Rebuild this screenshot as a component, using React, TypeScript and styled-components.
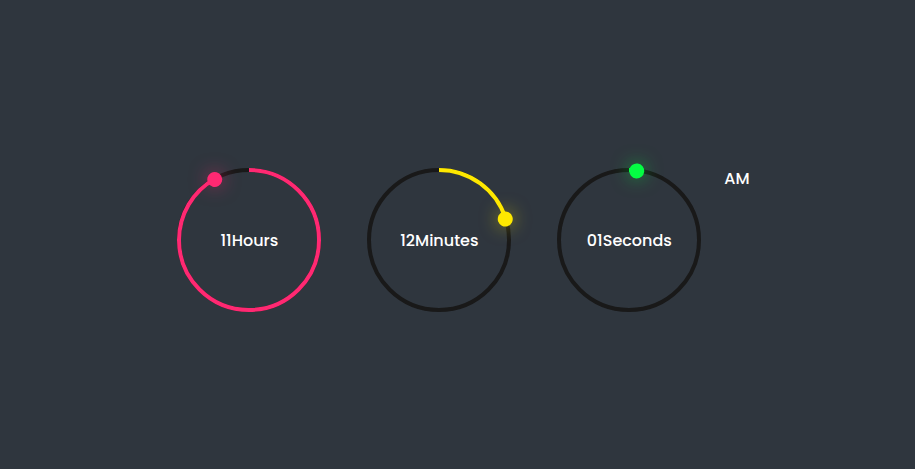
import React from "react";
import styled, { createGlobalStyle } from "styled-components";

const Global = createGlobalStyle`
  html, body { margin: 0; padding: 0; background: #2f363e; }
  body { font-family: Poppins, Inter, "Noto Sans", sans-serif; }
`;

const Page = styled.div`
  min-height: 469px;
  box-sizing: border-box;
  padding: 11px 0 0 9px;
  display: flex;
  justify-content: center;
  align-items: center;
  color: #fff;
`;

const Clock = styled.div`
  display: flex;
  align-items: center;
  gap: 40px;
`;

const Circle = styled.div`
  position: relative;
  width: 150px;
  height: 150px;
  display: flex;
  justify-content: center;
  align-items: center;
`;

const Ring = styled.svg`
  position: absolute;
  inset: 0;
  width: 150px;
  height: 150px;
  transform: rotate(-90deg);
`;

const Track = styled.circle`
  fill: transparent;
  stroke: #191919;
  stroke-width: 4;
`;

const Progress = styled.circle<{ $clr: string }>`
  fill: transparent;
  stroke: ${(p) => p.$clr};
  stroke-width: 4;
  stroke-dasharray: 440;
`;

const Dots = styled.div<{ $clr: string }>`
  position: absolute;
  inset: 0;
  display: flex;
  justify-content: center;
  z-index: 2;
  &::before {
    content: "";
    position: absolute;
    top: -2.5px;
    width: 15px;
    height: 15px;
    border-radius: 50%;
    background: ${(p) => p.$clr};
    box-shadow: 0 0 18px ${(p) => p.$clr}88, 0 0 60px ${(p) => p.$clr}1c;
  }
`;

const Label = styled.div`
  position: relative;
  z-index: 3;
  font-size: 16px;
  font-weight: 500;
  color: #fff;
`;

const Ap = styled.div`
  margin-left: -20px;
  font-size: 16px;
  font-weight: 500;
  transform: translateY(-62px);
  color: #fff;
`;

type Unit = { value: string; label: string; frac: number; clr: string };

const units: Unit[] = [
  { value: "11", label: "Hours", frac: 11 / 12, clr: "#ff2972" },
  { value: "12", label: "Minutes", frac: 12 / 60, clr: "#fee800" },
  { value: "01", label: "Seconds", frac: 1 / 60, clr: "#04fc43" },
];

export default function App() {
  return (
    <>
      <Global />
      <Page>
        <Clock>
          {units.map((u) => (
            <Circle key={u.label}>
              <Ring viewBox="0 0 150 150">
                <Track cx="75" cy="75" r="70" />
                <Progress
                  $clr={u.clr}
                  cx="75"
                  cy="75"
                  r="70"
                  style={{ strokeDashoffset: 440 - 440 * u.frac }}
                />
              </Ring>
              <Dots $clr={u.clr} style={{ transform: `rotate(${u.frac * 360}deg)` }} />
              <Label>
                {u.value}
                {u.label}
              </Label>
            </Circle>
          ))}
          <Ap>AM</Ap>
        </Clock>
      </Page>
    </>
  );
}
